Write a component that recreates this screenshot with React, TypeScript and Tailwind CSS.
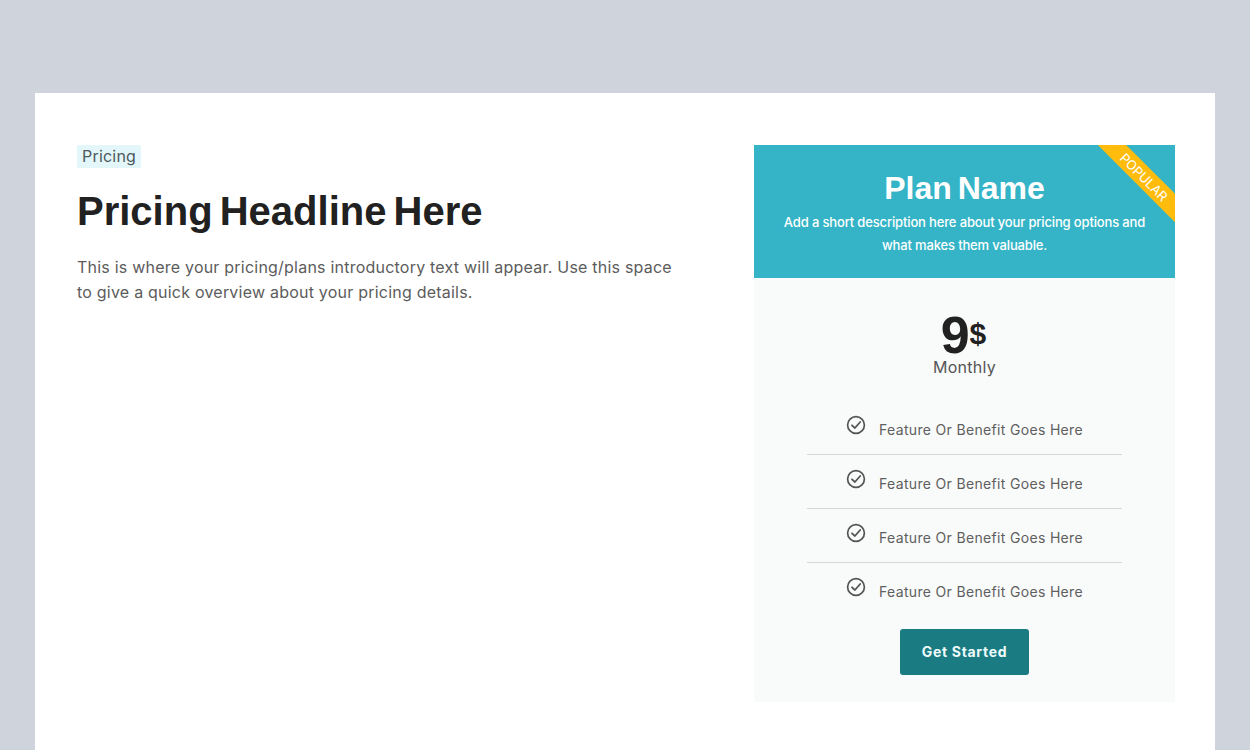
const features = [
  "Feature Or Benefit Goes Here",
  "Feature Or Benefit Goes Here",
  "Feature Or Benefit Goes Here",
  "Feature Or Benefit Goes Here",
];

const heading = "font-['Liberation_Sans',Arial,sans-serif]";

function CheckIcon() {
  return (
    <svg viewBox="0 0 20 20" fill="none" className="h-[20px] w-[20px] shrink-0 text-[#555]">
      <circle cx="10" cy="10" r="8.4" stroke="currentColor" strokeWidth="1.7" />
      <path
        d="M6 10.3 8.9 13 14.2 7"
        stroke="currentColor"
        strokeWidth="1.8"
        strokeLinecap="round"
        strokeLinejoin="round"
      />
    </svg>
  );
}

export default function App() {
  return (
    <div className="h-[750px] overflow-hidden bg-[#cfd4dc] px-[35px] pt-[93px] font-['Inter',sans-serif]">
      <div className="flex h-[657px] items-start justify-between bg-white pr-10 pl-[42px] pt-[52px]">
        <div className="w-[610px]">
          <span className="block w-fit rounded-[2px] bg-[#e3f7fa] px-[5px] text-base leading-[23px] tracking-[0.2px] text-[#4d5a5c]">
            Pricing
          </span>
          <h1 className={`${heading} mt-[18px] text-[40px] leading-[50px] font-bold [word-spacing:-4px] text-[#212121]`}>
            Pricing Headline Here
          </h1>
          <p className="mt-[19px] text-base leading-[25px] tracking-[0.22px] text-[#5c5c5c]">
            This is where your pricing/plans introductory text will appear. Use this space to give a quick overview about
            your pricing details.
          </p>
        </div>

        <div className="relative w-[421px] overflow-hidden bg-[#f9fafa]">
          <div className="h-[133px] bg-[#34b4c6] px-[20px] pt-[25px] text-center text-white">
            <h2 className={`${heading} text-[32px] leading-[36px] font-bold [word-spacing:-3px]`}>Plan Name</h2>
            <p className="mt-[5px] text-[13px] leading-[22.5px] font-medium tracking-[-0.15px]">
              Add a short description here about your pricing options and what makes them valuable.
            </p>
          </div>
          <div className="absolute top-[22px] right-[-49px] w-[160px] rotate-45 bg-[#ffbc0d] text-center text-[13px] leading-[20px] text-white">
            POPULAR
          </div>

          <div className="flex flex-col items-center pt-[35px] pb-[27px]">
            <div className="ml-[-2px] flex items-start font-bold text-[#212121]">
              <span className={`${heading} text-[52px] leading-[44px]`}>9</span>
              <span className={`${heading} mt-[6px] text-[30px] leading-[30px]`}>$</span>
            </div>
            <p className="text-base leading-[20px] tracking-[0.25px] text-[#555]">Monthly</p>
            <ul className="mt-[24px] w-[315px]">
              {features.map((feature, index) => (
                <li
                  key={index}
                  className="flex h-[54px] justify-center gap-[13px] border-b border-[#d5d8d8] pt-[14px] text-sm text-[#5f5f5f] last:border-b-0"
                >
                  <CheckIcon />
                  <span className="mt-[5px] leading-[20px] tracking-[0.33px]">{feature}</span>
                </li>
              ))}
            </ul>
            <button className="mt-[12px] h-[46px] w-[129px] rounded-[3px] bg-[#1a7b82] text-sm font-bold tracking-[0.7px] text-[#eefcfc]">
              Get Started
            </button>
          </div>
        </div>
      </div>
    </div>
  );
}
